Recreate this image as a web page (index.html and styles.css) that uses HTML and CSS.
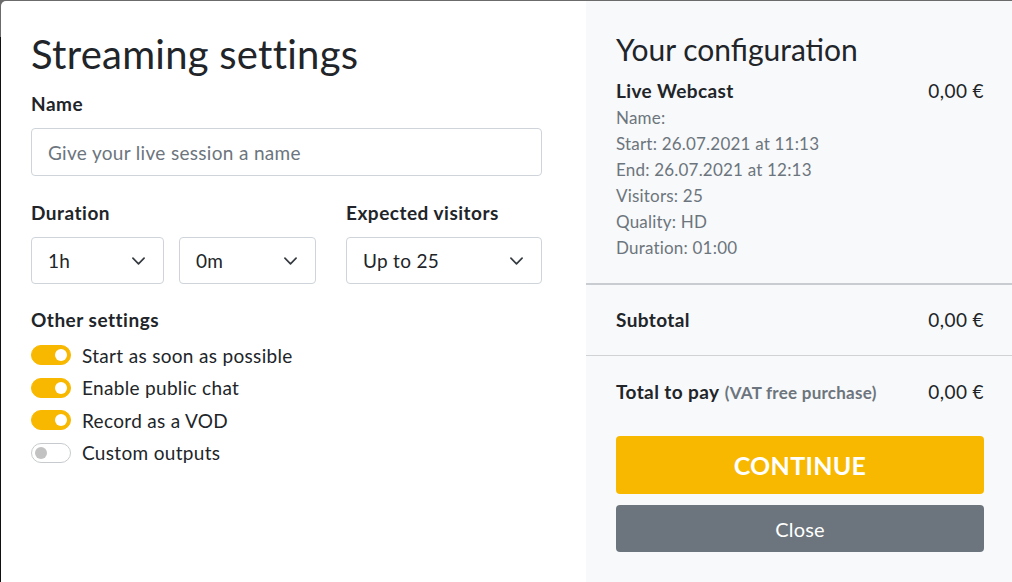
FILE: index.html
```html
<!DOCTYPE html>
<html>
<head>
<meta charset="utf-8">
<link rel="stylesheet" href="styles.css">
</head>
<body>
<div class="modal">
  <div class="left">
    <h1 class="title">Streaming settings</h1>
    <label class="label">Name</label>
    <div class="input placeholder">Give your live session a name</div>
    <div class="row">
      <div class="col-dur">
        <label class="label">Duration</label>
        <div class="pair">
          <div class="select"><span>1h</span><svg class="chev" viewBox="0 0 14 8"><path d="M1 1l6 6 6-6"/></svg></div>
          <div class="select"><span>0m</span><svg class="chev" viewBox="0 0 14 8"><path d="M1 1l6 6 6-6"/></svg></div>
        </div>
      </div>
      <div class="col-vis">
        <label class="label">Expected visitors</label>
        <div class="select"><span>Up to 25</span><svg class="chev" viewBox="0 0 14 8"><path d="M1 1l6 6 6-6"/></svg></div>
      </div>
    </div>
    <label class="label other">Other settings</label>
    <ul class="toggles">
      <li><span class="switch on"></span>Start as soon as possible</li>
      <li><span class="switch on"></span>Enable public chat</li>
      <li><span class="switch on"></span>Record as a VOD</li>
      <li><span class="switch"></span>Custom outputs</li>
    </ul>
  </div>
  <div class="right">
    <div class="conf">
      <h2 class="subtitle">Your configuration</h2>
      <div class="line"><strong>Live Webcast</strong><span>0,00 €</span></div>
      <ul class="details">
        <li>Name:</li>
        <li>Start: 26.07.2021 at 11:13</li>
        <li>End: 26.07.2021 at 12:13</li>
        <li>Visitors: 25</li>
        <li>Quality: HD</li>
        <li>Duration: 01:00</li>
      </ul>
    </div>
    <div class="sum sub">
      <div class="line"><strong>Subtotal</strong><span>0,00 €</span></div>
    </div>
    <div class="sum total">
      <div class="line"><span><strong>Total to pay</strong> <em class="vat">(VAT free purchase)</em></span><span>0,00 €</span></div>
    </div>
    <div class="actions">
      <button class="btn continue">CONTINUE</button>
      <button class="btn close">Close</button>
    </div>
  </div>
</div>
</body>
</html>
```
FILE: styles.css
```css
html, body {
  margin: 0;
  height: 100%;
}
body {
  background: linear-gradient(#6b6b6b 37px, #111 37px);
  font-family: Lato, "Open Sans", sans-serif;
  color: #212529;
  overflow: hidden;
}
.modal {
  margin: 1px 0 0 1px;
  height: 581px;
  width: 1011px;
  display: flex;
  background: #fff;
  border-top-left-radius: 5px;
  overflow: hidden;
}
.left {
  flex: 0 0 585px;
  box-sizing: border-box;
  padding: 30px 44px 0 30px;
}
.title {
  margin: 0 0 16px;
  font-size: 40px;
  font-weight: 400;
  line-height: 46px;
  letter-spacing: 0.25px;
}
.label {
  display: block;
  font-weight: 700;
  font-size: 19px;
  line-height: 22px;
  margin-bottom: 13px;
  letter-spacing: 0.5px;
}
.input {
  height: 48px;
  box-sizing: border-box;
  border: 1px solid #ced4da;
  border-radius: 4px;
  padding: 0 16px;
  display: flex;
  align-items: center;
  font-size: 19px;
  letter-spacing: 0.32px;
}
.placeholder { color: #6c757d; }
.row {
  display: flex;
  gap: 30px;
  margin-top: 26px;
}
.col-dur { flex: 0 0 285px; }
.col-vis { flex: 1; }
.pair {
  display: flex;
  gap: 15px;
}
.pair .select:first-child { flex: 0 0 133px; }
.pair .select:last-child { flex: 1; }
.select {
  height: 47px;
  box-sizing: border-box;
  border: 1px solid #ced4da;
  border-radius: 4px;
  padding: 0 18px 0 16px;
  display: flex;
  align-items: center;
  justify-content: space-between;
  font-size: 19px;
  letter-spacing: 0.3px;
}
.chev {
  width: 13px;
  height: 8px;
  fill: none;
  stroke: #343a40;
  stroke-width: 1.8;
  stroke-linecap: round;
  stroke-linejoin: round;
}
.other { margin-top: 25px; margin-bottom: 8px; }
.toggles {
  list-style: none;
  margin: 0;
  padding: 0;
}
.toggles li {
  display: flex;
  align-items: center;
  font-size: 19px;
  height: 32.5px;
  letter-spacing: 0.32px;
}
.switch {
  position: relative;
  width: 40px;
  height: 20px;
  box-sizing: border-box;
  border-radius: 10px;
  border: 1px solid #c8cbce;
  background: #fff;
  margin-right: 11px;
}
.switch::after {
  content: "";
  position: absolute;
  top: 3px;
  left: 3px;
  width: 12px;
  height: 12px;
  border-radius: 50%;
  background: #c2c2c2;
}
.switch.on {
  background: #f9b800;
  border-color: #f9b800;
}
.switch.on::after {
  left: 23px;
  background: #fff;
}
.right {
  flex: 1;
  background: #f8f9fa;
  display: flex;
  flex-direction: column;
}
.conf {
  padding: 30px 28px 22px 30px;
  border-bottom: 2px solid #c9ccd0;
}
.subtitle {
  margin: 0 0 12px;
  font-size: 30px;
  font-weight: 400;
  line-height: 36px;
}
.line {
  display: flex;
  justify-content: space-between;
  align-items: baseline;
  font-size: 19px;
  line-height: 24px;
  letter-spacing: 0.4px;
}
.line strong { font-weight: 700; }
.details {
  list-style: none;
  margin: 2px 0 0;
  padding: 0;
  color: #6c757d;
  font-size: 17px;
  line-height: 26px;
  letter-spacing: 0.2px;
}
.sum {
  padding: 0 28px 0 30px;
}
.sub {
  height: 70px;
  display: flex;
  flex-direction: column;
  justify-content: center;
  border-bottom: 1px solid #d0d3d6;
}
.total {
  height: 72px;
  display: flex;
  flex-direction: column;
  justify-content: center;
}
.vat {
  font-style: normal;
  font-weight: 700;
  font-size: 17px;
  color: #6c757d;
  letter-spacing: 0.25px;
}
.actions {
  padding: 8px 28px 0 30px;
  display: flex;
  flex-direction: column;
  gap: 11px;
}
.btn {
  border: none;
  border-radius: 4px;
  color: #fff;
  font-family: Lato, "Open Sans", sans-serif;
  width: 100%;
}
.continue {
  height: 58px;
  background: #f9b800;
  font-size: 25px;
  font-weight: 700;
  letter-spacing: 0.3px;
}
.close {
  height: 47px;
  background: #6c757d;
  font-size: 20px;
  font-weight: 400;
  letter-spacing: 0.2px;
}
```
